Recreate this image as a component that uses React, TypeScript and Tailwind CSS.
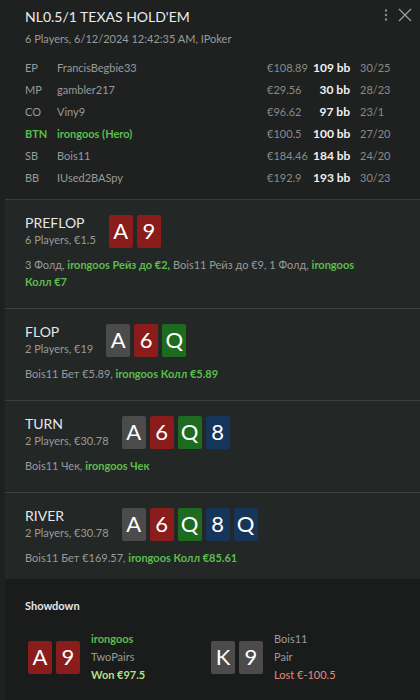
import React from "react";

type CardColor = "red" | "gray" | "green" | "blue";

const cardBg: Record<CardColor, string> = {
  red: "bg-[#8a1c1c]",
  gray: "bg-[#4b4b4b]",
  green: "bg-[#1d6b1f]",
  blue: "bg-[#15365a]",
};

function Card({ r, c }: { r: string; c: CardColor }) {
  return (
    <div
      className={`${cardBg[c]} w-[24px] h-[33px] rounded-[2px] flex items-center justify-center text-white text-[22px] leading-none`}
    >
      {r}
    </div>
  );
}

const players = [
  { pos: "EP", name: "FrancisBegbie33", amt: "€108.89", bb: "109 bb", st: "30/25" },
  { pos: "MP", name: "gambler217", amt: "€29.56", bb: "30 bb", st: "28/23" },
  { pos: "CO", name: "Viny9", amt: "€96.62", bb: "97 bb", st: "23/1" },
  { pos: "BTN", name: "irongoos (Hero)", amt: "€100.5", bb: "100 bb", st: "27/20", hero: true },
  { pos: "SB", name: "Bois11", amt: "€184.46", bb: "184 bb", st: "24/20" },
  { pos: "BB", name: "IUsed2BASpy", amt: "€192.9", bb: "193 bb", st: "30/23" },
];

function Street({
  title,
  sub,
  cards,
  children,
  last,
}: {
  title: string;
  sub: string;
  cards: [string, CardColor][];
  children: React.ReactNode;
  last?: boolean;
}) {
  return (
    <div
      className={`ml-[5px] bg-[#232726] ${last ? "pb-[13px]" : "border-b border-[#3a3e3c] pb-[18px]"} pl-[20px] pr-[55px] pt-[14px]`}
    >
      <div className="flex items-center gap-[13px]">
        <div className="flex flex-col">
          <div className="text-[14px] leading-[18px] text-[#e6e6e6]">{title}</div>
          <div className="text-[11px] leading-[16px] text-[#9a9a9a]">{sub}</div>
        </div>
        <div className="flex gap-[4px]">
          {cards.map(([r, c], i) => (
            <Card key={i} r={r} c={c} />
          ))}
        </div>
      </div>
      <div className="mt-[8px] text-[11px] leading-[17px] text-[#9a9a9a]">{children}</div>
    </div>
  );
}

const G = ({ children }: { children: React.ReactNode }) => (
  <span className="font-bold text-[#5cbd4d]">{children}</span>
);

export default function App() {
  return (
    <div
      className="w-[420px] h-[700px] overflow-hidden bg-[#1e2120] relative"
      style={{ fontFamily: 'Lato, "Noto Sans", sans-serif' }}
    >
      {/* header */}
      <div className="relative pl-[20px] pr-[28px] pt-[7px] pb-[10px] border-b border-[#3a3e3c] ml-[5px]">
        <div className="text-[14px] leading-[20px] text-[#ececec]">NL0.5/1 TEXAS HOLD'EM</div>
        <div className="text-[11px] leading-[16px] mt-[4px] text-[#9a9a9a]">
          6 Players, 6/12/2024 12:42:35 AM, IPoker
        </div>
        <div className="absolute right-[32px] top-[8px] text-[#8a8a8a]">
          <svg width="4" height="14" viewBox="0 0 4 14">
            <circle cx="2" cy="2.5" r="1.2" fill="currentColor" />
            <circle cx="2" cy="7" r="1.2" fill="currentColor" />
            <circle cx="2" cy="11.5" r="1.2" fill="currentColor" />
          </svg>
        </div>
        <div className="absolute right-[8px] top-[8px] text-[#a0a0a0]">
          <svg width="14" height="14" viewBox="0 0 14 14" stroke="currentColor" strokeWidth="1.2">
            <path d="M1 1 L13 13 M13 1 L1 13" />
          </svg>
        </div>
        <div className="mt-[10px] flex flex-col">
          {players.map((p) => (
            <div key={p.pos} className="flex items-center h-[22px] text-[11px] whitespace-nowrap">
              <div className={`w-[32px] ${p.hero ? "text-[#5cbd4d] font-bold" : "text-[#9a9a9a]"}`}>{p.pos}</div>
              <div className={`flex-1 ${p.hero ? "text-[#5cbd4d] font-bold" : "text-[#9a9a9a]"}`}>{p.name}</div>
              <div className="w-[46px] text-[#8a8a8a]">{p.amt}</div>
              <div className="w-[37px] text-right font-bold text-[12px] text-[#f0f0f0]">{p.bb}</div>
              <div className="w-[32px] ml-[10px] text-[#8a8a8a]">{p.st}</div>
            </div>
          ))}
        </div>
      </div>

      <Street title="PREFLOP" sub="6 Players, €1.5" cards={[["A", "red"], ["9", "red"]]}>
        <div>
          3 Фолд, <G>irongoos Рейз до €2,</G> Bois11 Рейз до €9, 1 Фолд, <G>irongoos</G>
        </div>
        <div>
          <G>Колл €7</G>
        </div>
      </Street>
      <Street title="FLOP" sub="2 Players, €19" cards={[["A", "gray"], ["6", "red"], ["Q", "green"]]}>
        Bois11 Бет €5.89, <G>irongoos Колл €5.89</G>
      </Street>
      <Street
        title="TURN"
        sub="2 Players, €30.78"
        cards={[["A", "gray"], ["6", "red"], ["Q", "green"], ["8", "blue"]]}
      >
        Bois11 Чек, <G>irongoos Чек</G>
      </Street>
      <Street
        title="RIVER"
        sub="2 Players, €30.78"
        cards={[["A", "gray"], ["6", "red"], ["Q", "green"], ["8", "blue"], ["Q", "blue"]]}
        last
      >
        Bois11 Бет €169.57, <G>irongoos Колл €85.61</G>
      </Street>

      {/* showdown */}
      <div className="ml-[5px] bg-[#1a1c1b] h-[200px] pl-[20px] pt-[19px]">
        <div className="text-[11px] leading-[16px] font-bold text-[#e6e6e6]">Showdown</div>
        <div className="grid grid-cols-[183px_1fr] mt-[16px] pl-[3px]">
          <div className="flex items-center gap-[11px]">
            <div className="flex gap-[4px]">
              <Card r="A" c="red" />
              <Card r="9" c="red" />
            </div>
            <div className="flex flex-col text-[11px] leading-[18px]">
              <span className="font-bold text-[#5cbd4d]">irongoos</span>
              <span className="text-[#9a9a9a]">TwoPairs</span>
              <span className="font-bold text-[#b5df8a]">Won €97.5</span>
            </div>
          </div>
          <div className="flex items-center gap-[11px]">
            <div className="flex gap-[4px]">
              <Card r="K" c="gray" />
              <Card r="9" c="gray" />
            </div>
            <div className="flex flex-col text-[11px] leading-[18px]">
              <span className="text-[#9a9a9a]">Bois11</span>
              <span className="text-[#9a9a9a]">Pair</span>
              <span className="text-[#e58a7e]">Lost €-100.5</span>
            </div>
          </div>
        </div>
      </div>
    </div>
  );
}
